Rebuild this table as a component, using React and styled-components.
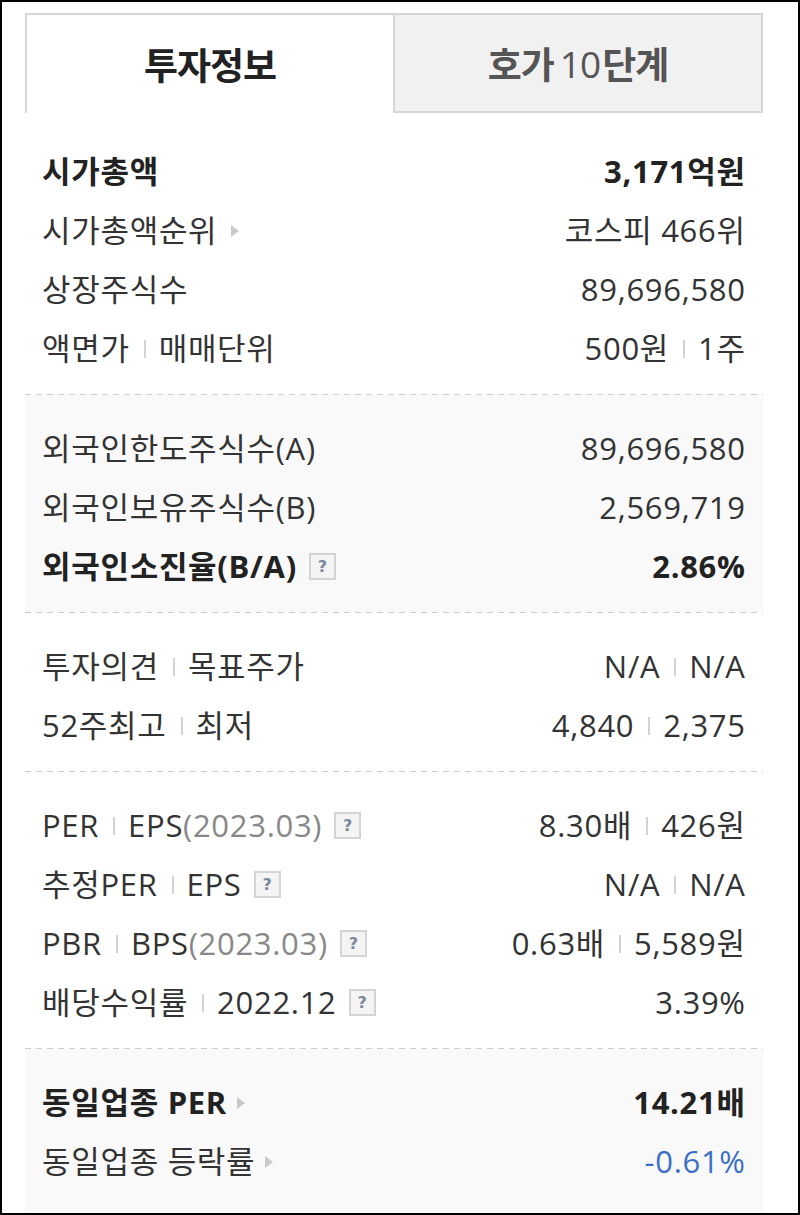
import React from 'react';
import styled, { createGlobalStyle } from 'styled-components';

const GlobalStyle = createGlobalStyle`
    html, body {
        margin: 0;
        padding: 0;
        background: #fff;
    }
    body {
        font-family: "Open Sans", "Noto Sans CJK KR", sans-serif;
    }
`

const Frame = styled.div`
    width: 800px;
    height: 1215px;
    box-sizing: border-box;
    border: 2px solid #000;
    padding: 11px 35px 0 23px;
    display: flex;
    flex-direction: column;
    background: #fff;
    overflow: hidden;
`

const Tabs = styled.div`
    display: flex;
    height: 100px;
    flex-shrink: 0;
`

const Tab = styled.div`
    flex: 1;
    display: flex;
    align-items: center;
    justify-content: center;
    box-sizing: border-box;
    font-family: "Noto Sans CJK KR", sans-serif;
    font-size: 37px;
    font-weight: 700;
    letter-spacing: -1px;
    color: ${(props) => (props.$active ? '#222' : '#555')};
    background: ${(props) => (props.$active ? '#fff' : '#f1f1f1')};
    border: 2px solid #d6d6d6;
    border-right: ${(props) => (props.$active ? 'none' : '2px solid #d6d6d6')};
    border-bottom: ${(props) => (props.$active ? 'none' : '2px solid #d6d6d6')};
`

const TabNum = styled.span`
    font-family: "Open Sans", sans-serif;
    font-weight: 500;
    margin: 0 2px 0 6px;
`

const Panel = styled.div`
    flex: 1;
    display: flex;
    flex-direction: column;
`

const Section = styled.section`
    position: relative;
    padding: ${(props) => (props.$first ? '29px' : '25px')} 0 16px;
    background: ${(props) => (props.$shaded ? '#f9f9f9' : '#fff')};
    flex: ${(props) => (props.$fill ? 1 : 'none')};

    &::before {
        content: '';
        display: ${(props) => (props.$first ? 'none' : 'block')};
        position: absolute;
        top: 0;
        left: 0;
        right: 0;
        height: 1px;
        background: repeating-linear-gradient(to right, #cfcfcf 0 6px, transparent 6px 11px);
    }
`

const Row = styled.div`
    height: 59px;
    display: flex;
    align-items: center;
    justify-content: space-between;
    padding: 0 18px 0 17px;
    font-size: 31px;
    line-height: 1;
    letter-spacing: 0.7px;
    font-weight: ${(props) => (props.$strong ? 700 : 400)};
    color: ${(props) => (props.$strong ? '#222' : '#333')};
    white-space: nowrap;
`

const Label = styled.div`
    display: flex;
    align-items: center;
`

const Value = styled.div`
    display: flex;
    align-items: center;
    margin-right: -0.7px;
    color: ${(props) => props.$color || 'inherit'};
`

const Sep = styled.span`
    display: inline-block;
    width: 2px;
    height: 18px;
    background: #d3d3d3;
    margin: 0 13px 0 14px;
`

const Dim = styled.span`
    color: #888;
`

const Help = styled.span`
    display: inline-flex;
    align-items: center;
    justify-content: center;
    width: 27px;
    height: 27px;
    box-sizing: border-box;
    margin-left: 12px;
    border: 2px solid #d4d4d4;
    background: #f4f4f4;
    color: #7a879c;
    font-family: "DejaVu Sans", sans-serif;
    font-size: 16px;
    font-weight: 700;
    letter-spacing: 0;
`

const Arrow = styled.span`
    display: inline-block;
    width: 0;
    height: 0;
    margin-left: ${(props) => props.$gap || 14}px;
    border-left: 8px solid #c9c9c9;
    border-top: 6px solid transparent;
    border-bottom: 6px solid transparent;
`

const sections = [
    {
        first: true,
        rows: [
            { strong: true, label: <>시가총액</>, value: <>3,171억원</> },
            { label: <>시가총액순위<Arrow /></>, value: <>코스피 466위</> },
            { label: <>상장주식수</>, value: <>89,696,580</> },
            { label: <>액면가<Sep />매매단위</>, value: <>500원<Sep />1주</> },
        ],
    },
    {
        shaded: true,
        rows: [
            { label: <>외국인한도주식수(A)</>, value: <>89,696,580</> },
            { label: <>외국인보유주식수(B)</>, value: <>2,569,719</> },
            { strong: true, label: <>외국인소진율(B/A)<Help>?</Help></>, value: <>2.86%</> },
        ],
    },
    {
        rows: [
            { label: <>투자의견<Sep />목표주가</>, value: <>N/A<Sep />N/A</> },
            { label: <>52주최고<Sep />최저</>, value: <>4,840<Sep />2,375</> },
        ],
    },
    {
        rows: [
            { label: <>PER<Sep />EPS<Dim>(2023.03)</Dim><Help>?</Help></>, value: <>8.30배<Sep />426원</> },
            { label: <>추정PER<Sep />EPS<Help>?</Help></>, value: <>N/A<Sep />N/A</> },
            { label: <>PBR<Sep />BPS <Dim>(2023.03)</Dim><Help>?</Help></>, value: <>0.63배<Sep />5,589원</> },
            { label: <>배당수익률<Sep />2022.12<Help>?</Help></>, value: <>3.39%</> },
        ],
    },
    {
        shaded: true,
        fill: true,
        rows: [
            { strong: true, label: <>동일업종 PER<Arrow $gap={10} /></>, value: <>14.21배</> },
            { label: <>동일업종 등락률<Arrow $gap={10} /></>, value: <>-0.61%</>, color: '#3b6fc7' },
        ],
    },
]

const App = () => {
    return (
        <>
            <GlobalStyle />
            <Frame>
                <Tabs>
                    <Tab $active>투자정보</Tab>
                    <Tab>호가<TabNum>10</TabNum>단계</Tab>
                </Tabs>
                <Panel>
                    {sections.map((section, i) => (
                        <Section key={i} $first={section.first} $shaded={section.shaded} $fill={section.fill}>
                            {section.rows.map((row, j) => (
                                <Row key={j} $strong={row.strong}>
                                    <Label>{row.label}</Label>
                                    <Value $color={row.color}>{row.value}</Value>
                                </Row>
                            ))}
                        </Section>
                    ))}
                </Panel>
            </Frame>
        </>
    )
}

export default App;
